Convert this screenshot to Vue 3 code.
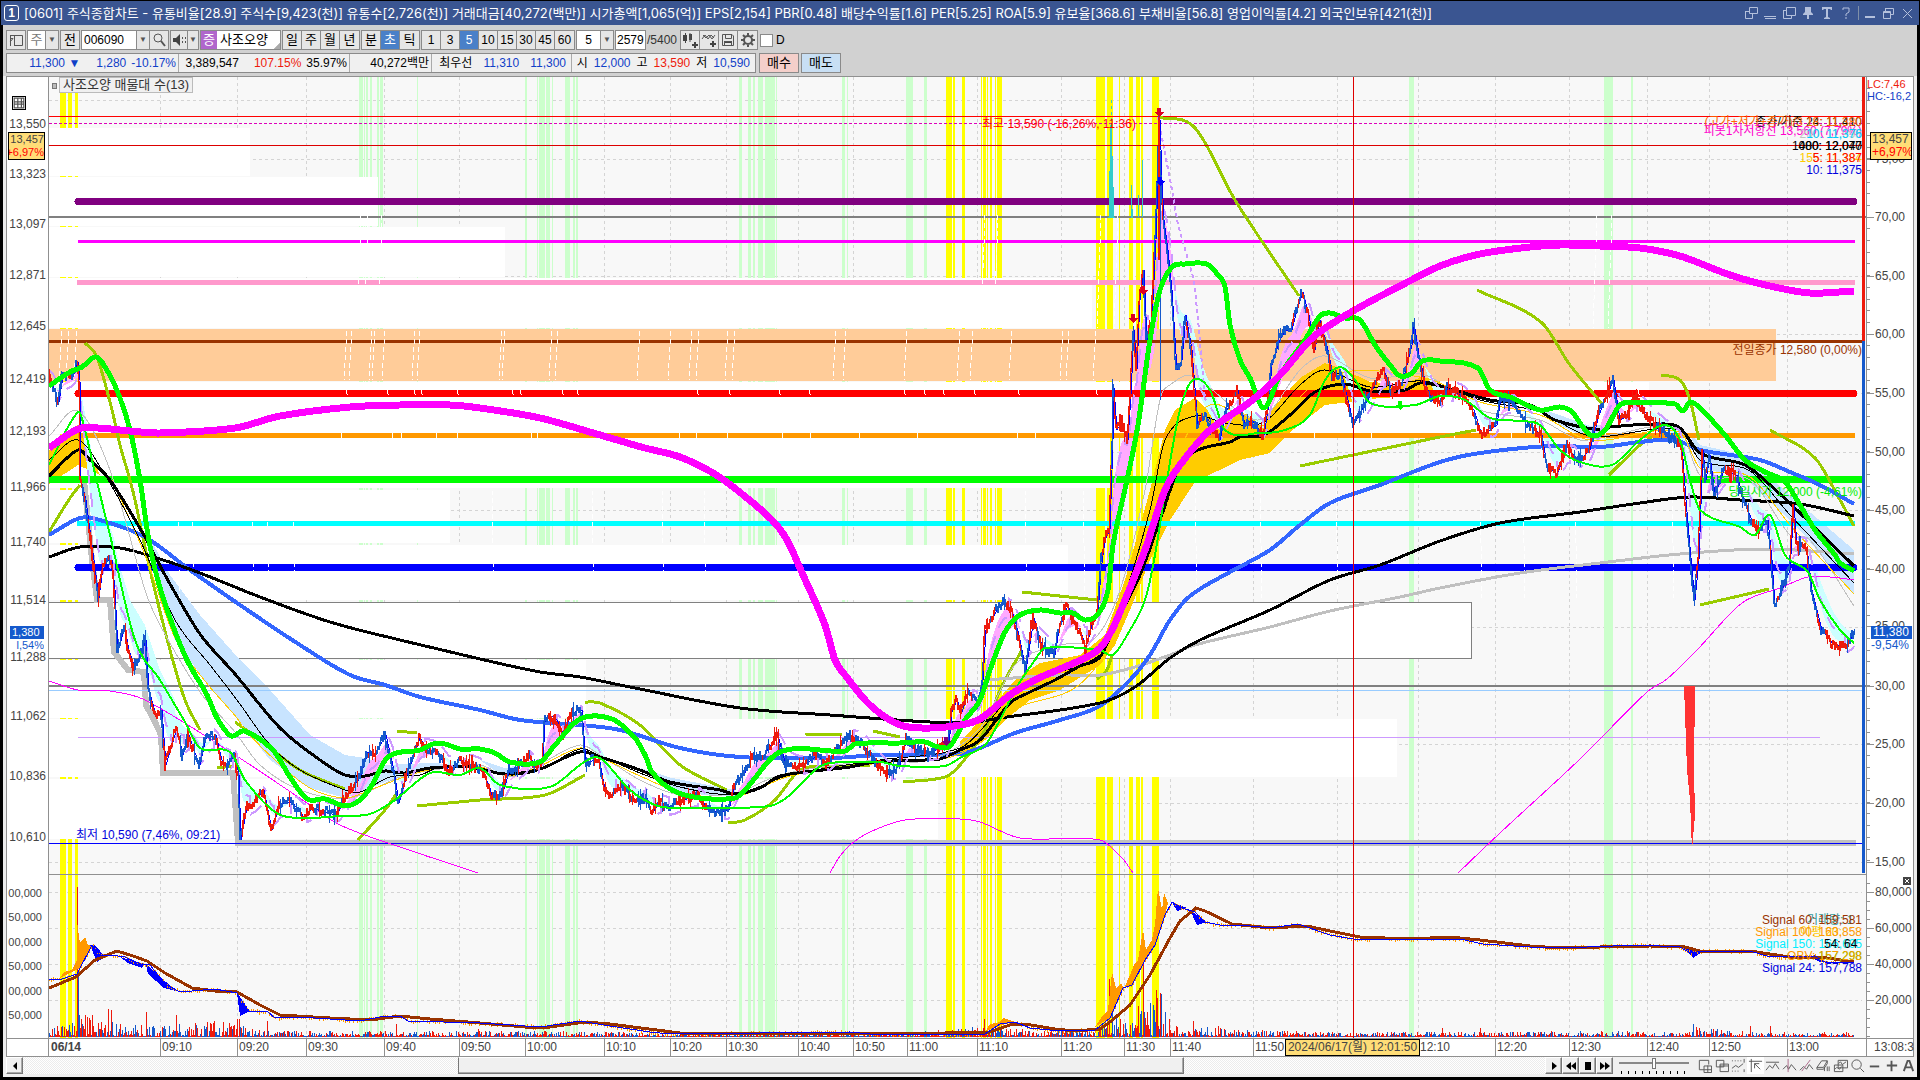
<template>
  <div class="window">
    <header class="titlebar">
      <span class="titlebar__no">1</span>
      <h1 class="titlebar__text">{{ title }}</h1>
      <div class="titlebar__icons">
        <button v-for="icon in windowIcons" :key="icon.name" class="titlebar__btn" :class="{ 'titlebar__btn--split': icon.split }" :aria-label="icon.name">
          <svg viewBox="0 0 14 14"><path :d="icon.d" :class="{ solid: icon.solid }" /></svg>
        </button>
      </div>
    </header>

    <main class="frame">
      <section class="tools">
        <div class="tools__row">
          <button class="btn btn--icon" aria-label="패널"><svg viewBox="0 0 16 16"><path d="M2.5 3.5H14.5V13.5H6M2.5 3V14M6.5 3V13M2 6.5H5L2 10" /></svg></button>
          <div class="combo combo--type"><span class="combo__muted">주</span><button class="combo__arrow" aria-label="구분 선택">▼</button></div>
          <button class="btn">전</button>
          <div class="combo combo--code">
            <input v-model="code" class="combo__input" aria-label="종목코드" />
            <button class="combo__arrow" aria-label="종목 목록">▼</button>
            <button class="combo__arrow combo__arrow--wide" aria-label="종목 찾기"><svg viewBox="0 0 16 16"><circle cx="7" cy="6" r="4" /><path d="M10 9L14 14" class="thick" /></svg></button>
          </div>
          <div class="combo combo--sound">
            <button class="combo__arrow combo__arrow--wide" aria-label="소리"><svg viewBox="0 0 16 16"><path class="solid" d="M2 6H5L9 2V14L5 10H2Z" /><path d="M11.5 5V7M11.5 9V11M14.5 5V7M14.5 9V11" /></svg></button>
            <button class="combo__arrow" aria-label="소리 목록">▼</button>
          </div>
          <div class="stock"><span class="stock__badge">증</span><span class="stock__name">사조오양</span></div>
          <div class="btn-group">
            <button v-for="p in ['일', '주', '월', '년']" :key="p" class="btn btn--cell">{{ p }}</button>
          </div>
          <div class="btn-group">
            <button v-for="p in ['분', '초', '틱']" :key="p" class="btn btn--cell" :class="{ 'btn--active': p === unit }" @click="unit = p">{{ p }}</button>
          </div>
          <div class="btn-group">
            <button v-for="n in [1, 3, 5, 10, 15, 30, 45, 60]" :key="n" class="btn btn--cell btn--number" :class="{ 'btn--active': n === span }" @click="span = n">{{ n }}</button>
          </div>
          <div class="combo combo--span"><span>5</span><button class="combo__arrow" aria-label="주기 선택">▼</button></div>
          <input v-model="bars" class="bars" aria-label="봉 개수" />
          <span class="bars-total">/5400</span>
          <div class="btn-group">
            <button v-for="icon in chartIcons" :key="icon.name" class="btn btn--cell" :aria-label="icon.name">
              <svg viewBox="0 0 16 16"><path v-if="icon.s" class="solid" :d="icon.s" /><path :d="icon.d" :class="{ thick: icon.thick }" /></svg>
            </button>
          </div>
          <label class="check"><input type="checkbox" />D</label>
        </div>

        <div class="tools__row">
          <div class="quote">
            <div class="quote__cell quote__cell--price blue"><span>11,300 ▼</span><span>1,280</span><span>-10.17%</span></div>
            <div class="quote__cell quote__cell--volume"><span>3,389,547</span><span class="red">107.15%</span><span>35.97%</span></div>
            <div class="quote__cell quote__cell--amount"><span>40,272백만</span></div>
            <div class="quote__cell quote__cell--best"><span>최우선</span><span class="blue">11,310</span><span class="blue">11,300</span></div>
            <div class="quote__cell quote__cell--range"><span>시</span><span class="blue">12,000</span><span>고</span><span class="red">13,590</span><span>저</span><span class="blue">10,590</span></div>
          </div>
          <button class="order order--buy">매수</button>
          <button class="order order--sell">매도</button>
        </div>
      </section>

      <section class="chart">
        <div class="axis axis--left">
          <button class="axis__menu" aria-label="데이터 표"><svg viewBox="0 0 10 10"><path d="M1 1H9V9H1ZM1 4H9M4 1V9M7 1V9M1 6H9" /></svg></button>
          <span v-for="l in leftLabels" :key="l[0]" class="axis__label" :style="at(l[1])">{{ l[0] }}</span>
          <span v-for="(l, i) in leftVolume" :key="i" class="axis__label axis__label--volume" :style="at(893 + i * 24.4)">{{ l }}</span>
          <div class="tag tag--cross" :style="at(146)"><span>13,457</span><span class="tag__rate">+6,97%</span></div>
          <div class="tag tag--last" :style="at(639)"><b>1,380</b><span>l,54%</span></div>
        </div>

        <div class="plot">
          <svg class="plot__svg" viewBox="49 77 1817 961" preserveAspectRatio="none">
            <path class="grid" :d="gridPath" />
            <rect v-for="b in yellowBands" :key="b[0]" :x="b[0]" y="77" :width="b[1]" height="961" fill="#ffff00" />
            <rect v-for="b in greenBands" :key="b[0]" :x="b[0]" y="77" :width="b[1]" height="961" fill="#ccffcc" />

            <!-- volume profile -->
            <rect v-for="p in profile" :key="p[0]" x="49" :y="p[0]" :width="p[2] - 49" :height="p[1] - p[0]" fill="#ffffff" />
            <rect x="49" y="329" width="1727" height="52" fill="#ffcc99" />
            <path d="M49 602.5H1471.5V658.5H49" fill="#ffffff" stroke="#808080" />

            <path d="M84 480L92 560L97 600H110L114 652L128 670L144 672L146 705L155 722L161 735L163 773H233L238 843H1856" stroke="#c0c0c0" stroke-width="6" fill="none" />
            <path v-for="(f, i) in clouds" :key="i" :d="line(f.p) + 'Z'" :fill="f.c" />
            <path :d="trend.down" stroke="#ccffff" />
            <path :d="trend.up" stroke="#ffaaff" />

            <path v-for="l in levels" :key="l.y" :d="`M${l.x || 49} ${l.y}H${l.e || 1862}`" :stroke="l.c" :stroke-width="l.w" :stroke-dasharray="l.dash" :stroke-linecap="l.w > 6 && l.x ? 'round' : 'butt'" />
            <path class="ghost" :d="ghosts" />
            <path d="M1111 100V180" stroke="#33cccc" stroke-dasharray="3 3" />
            <path d="M1111 125L1114 217H1109ZM1131 185V217H1133M1138 195V217M1142 160V217" fill="#33cccc" stroke="#33cccc" />

            <path v-for="(o, i) in olive" :key="'o' + i" :d="smooth(o)" stroke="#99cc00" stroke-width="3" />
            <path v-for="(m, i) in averages" :key="'m' + i" :d="smooth(m.p)" :stroke="m.c" :stroke-width="m.w" stroke-linejoin="round" />
            <path :d="trend.lag" stroke="#cc99ff" stroke-width="2" stroke-dasharray="14 9" />
            <path d="M1158 117L1172 190L1178 225L1194 280L1199 330L1205 400" stroke="#cc99ff" stroke-width="2" stroke-dasharray="4 3" />
            <path :d="candles.mid" stroke="#0000ff" />
            <path :d="candles.down" stroke="#1559cc" />
            <path :d="candles.up" stroke="#ee1a0c" />
            <path d="M1158.5 117V260" stroke="#ee1a0c" stroke-width="2" />
            <path d="M1160.5 180V400" stroke="#1559cc" />
            <path v-for="(m, i) in frontAverages" :key="'f' + i" :d="smooth(m.p)" :stroke="m.c" :stroke-width="m.w" stroke-linejoin="round" />
            <path d="M1684 686H1695L1694 770L1695 815L1692 850L1690 800L1687 770Z" fill="#ff3333" />
            <path v-for="a in arrows" :key="a.x" :d="`M${a.x - 2} ${a.y - 5}h4v4h3l-5 5l-5-5h3z`" :fill="a.c" />

            <!-- volume and OBV pane -->
            <path :d="volume.up" stroke="#ee1a0c" />
            <path :d="volume.down" stroke="#1559cc" />
            <path v-for="(f, i) in obvFills" :key="'v' + i" :d="line(f.p) + 'Z'" :fill="f.c" />
            <path :d="obvJitter" stroke="#ff9900" />
            <path :d="line(obvSlow)" stroke="#993300" stroke-width="3" />
            <path :d="line(obvFast)" stroke="#0000ff" />

            <path d="M49 874.5H1866" stroke="#909090" />
            <rect x="1862" y="77" width="3" height="264" fill="#ee1a0c" />
            <rect x="1862" y="341" width="3" height="532" fill="#1559cc" />
            <path d="M49 145.5H1862" stroke="#dd0000" />
            <path d="M1353.5 77V1038" stroke="#dd0000" />
          </svg>
          <i class="plot__handle"></i>
          <span class="plot__title">사조오양 매물대 수(13)</span>
          <span v-for="(t, i) in notes" :key="i" class="note" :class="'note--' + t.c" :style="place(t)">{{ t.t }}</span>
        </div>

        <div class="axis axis--right">
          <div class="axis__limits"><span class="red">LC:7,46</span><span class="blue">HC:-16,2</span></div>
          <svg class="axis__ticks" viewBox="0 77 8 961" preserveAspectRatio="none"><path :d="tickPath" /></svg>
          <span v-for="l in rightLabels" :key="l[0]" class="axis__label" :style="at(l[1])">{{ l[0] }}</span>
          <button class="axis__close" :style="at(881)" aria-label="닫기"><svg viewBox="0 0 8 8"><path d="M2 2L6 6M6 2L2 6" /></svg></button>
          <div class="tag tag--cross" :style="at(146)"><span>13,457</span><span class="tag__rate">+6,97%</span></div>
          <div class="tag tag--last" :style="at(639)"><b>11,380</b><span>-9,54%</span></div>
        </div>

        <div class="times times--edge"></div>
        <div class="times">
          <b class="times__day">06/14</b>
          <span v-for="t in timeLabels" :key="t[0]" class="times__label" :style="{ left: pctX(t[1]) }">{{ t[0] }}</span>
          <span class="times__cursor" :style="{ left: pctX(1285) }">2024/06/17(월) 12:01:50</span>
        </div>
        <div class="times times--end">13:08:3</div>
      </section>

      <footer class="bottom">
        <button class="bottom__btn" aria-label="왼쪽으로"><svg viewBox="0 0 12 12"><path class="solid" d="M8 2V10L4 6Z" /></svg></button>
        <div class="bottom__track"><div class="bottom__thumb" :style="{ left: '28.6%', width: '47.7%' }"></div></div>
        <button v-for="p in players" :key="p.name" class="bottom__btn" :aria-label="p.name"><svg viewBox="0 0 12 12"><path class="solid" :d="p.d" /></svg></button>
        <label class="slider" aria-label="속도"><input v-model="speed" type="range" min="0" max="10" /></label>
        <button v-for="icon in drawIcons" :key="icon.name" class="bottom__tool" :class="{ 'bottom__tool--on': icon.on }" :aria-label="icon.name">
          <svg viewBox="0 0 16 16"><path :d="icon.d" :class="{ thick: icon.thick }" /><path v-if="icon.r" :d="icon.r" class="accent" /></svg>
        </button>
      </footer>
    </main>
  </div>
</template>

<script setup>
import { ref } from 'vue'

const title = '[0601] 주식종합차트 - 유통비율[28.9] 주식수[9,423(천)] 유통수[2,726(천)] 거래대금[40,272(백만)] 시가총액[1,065(억)] EPS[2,154] PBR[0.48] 배당수익률[1.6] PER[5.25] ROA[5.9] 유보율[368.6] 부채비율[56.8] 영업이익률[4.2] 외국인보유[421(천)]'

const code = ref('006090')
const bars = ref('2579')
const unit = ref('초')
const span = ref(5)
const speed = ref(5)

const windowIcons = [
  { name: '연결', d: 'M5.5 1.5H13.5V7.5H5.5ZM1 5.5H5M1.5 5V12.5H8.5V7' },
  { name: '접기', d: 'M1 10.5H13M2 12.5H13' },
  { name: '복사', d: 'M4.5 1.5H13.5V9.5H4.5ZM1.5 4V12.5H9.5V10M1 4.5H4' },
  { name: '고정', d: 'M4 1H10V6L12 8V9H8V13H6V9H2V8L4 6Z', solid: true },
  { name: '글꼴', d: 'M2 1H12V4H11L10 3H8V11L10 12V13H4V12L6 11V3H4L3 4H2Z', solid: true },
  { name: '도움말', d: 'M4 4V2H10V6L7 8V10M7 11V13' },
  { name: '최소화', d: 'M2 10H12V12H2Z', solid: true, split: true },
  { name: '이전 크기', d: 'M4.5 2.5H12.5V8.5H10M2.5 5.5H9.5V12.5H2.5ZM4.5 2V5M2 6.5H10' },
  { name: '닫기', d: 'M3 3L12 12M12 3L3 12' }
]

const chartIcons = [
  { name: '차트 유형', s: 'M1 3H5V9H1ZM3 1H4V11H3ZM7 2H10V8H7ZM10 12H16V14H10ZM12 10H14V16H12Z', d: 'M8 1V10' },
  { name: '지표 추가', s: 'M9 11H15V13H9ZM11 9H13V15H11Z', d: 'M1 7L4 3L7 7L10 3L13 6M2 3L5 6L8 3L11 7L14 3' },
  { name: '저장', s: 'M4 9H12V11H4Z', d: 'M2.5 2.5H12L13.5 4V13.5H2.5ZM5.5 2V6.5H11.5V2M4.5 14V9.5H11.5V14' },
  { name: '설정', d: 'M8 4A4 4 0 1 0 8 12A4 4 0 1 0 8 4M8 1V4M8 12V15M1 8H4M12 8H15M3 3L5 5M11 11L13 13M13 3L11 5M5 11L3 13', thick: true }
]

const players = [
  { name: '재생', d: 'M4 2L9 6L4 10Z' },
  { name: '뒤로', d: 'M6 2V10L1 6ZM11 2V10L6 6Z' },
  { name: '정지', d: 'M3 2H9V10H3Z' },
  { name: '앞으로', d: 'M1 2L6 6L1 10ZM6 2L11 6L6 10Z' }
]

const drawIcons = [
  { name: '창 추가', d: 'M8 12.5H2.5V2.5H12.5V7M7.5 8.5H15.5V15.5H7.5ZM11.5 8V15M8 12.5H15' },
  { name: '창 복사', d: 'M2.5 2.5H10.5V9.5H2.5ZM6.5 6.5H15.5V14.5H6.5ZM6 8.5H15' },
  { name: '구간', d: 'M1 3H2M4 3H5M7 3H8M10 3H11M14 1V5M1 14H2M4 14H5M7 14H8M14 12V15M1 11L5 8L8 10L13 6' },
  { name: '십자선', d: 'M1 3.5H15M3.5 1V15M7 6L13 12M7 6V11M7 6H12', on: true },
  { name: '수평선', d: 'M1 4.5H15M1 13L5 8L8 11L11 6L15 12' },
  { name: '수직선', d: 'M1 12L5 8L7 12L10 7L15 13', r: 'M6.5 1V15' },
  { name: '추세선', d: 'M1 13L5 9L8 12L11 7L15 12', r: 'M3 14L12 2' },
  { name: '지우기', d: 'M1 10L6 3H12L8 10ZM1 10V12H8L12 6V3M9 10V14M12 9V14M14 9V14' },
  { name: '차트 겹치기', d: 'M5.5 2.5H15.5V10.5H5.5ZM1.5 7.5H10.5V14.5H1.5ZM6 6L8 4L10 7L14 4M2 12L4 10L7 12L9 9' },
  { name: '확대경', d: 'M7 2A5 5 0 1 0 7 12A5 5 0 1 0 7 2M11 11L15 15' },
  { name: '축소', d: 'M3 9H13', thick: true },
  { name: '확대', d: 'M3 8H14M8 3V14', thick: true },
  { name: '자동', d: 'M3 14L7 3H9L13 14M5 10H11', thick: true }
]

// axis scales
const at = y => ({ top: ((y - 77) / 961) * 100 + '%' })
const pctX = x => ((x - 49) / 1817) * 100 + '%'
const place = t => (t.x ? { left: pctX(t.x), ...at(t.y) } : at(t.y))

const leftLabels = [['13,550', 124], ['13,323', 174], ['13,097', 224], ['12,871', 275], ['12,645', 326], ['12,419', 379], ['12,193', 431], ['11,966', 487], ['11,740', 542], ['11,514', 600], ['11,288', 657], ['11,062', 716], ['10,836', 776], ['10,610', 837]]
const leftVolume = ['00,000', '50,000', '00,000', '50,000', '00,000', '50,000']
const rightLabels = [['75,00', 159], ['70,00', 217], ['65,00', 276], ['60,00', 334], ['55,00', 393], ['50,00', 452], ['45,00', 510], ['40,00', 569], ['35,00', 626], ['30,00', 686], ['25,00', 744], ['20,00', 803], ['15,00', 862], ['80,000', 892], ['60,000', 928], ['40,000', 964], ['20,000', 1000]]
const times = [['09:10', 160], ['09:20', 237], ['09:30', 306], ['09:40', 384], ['09:50', 459], ['10:00', 525], ['10:10', 604], ['10:20', 670], ['10:30', 726], ['10:40', 798], ['10:50', 853], ['11:00', 907], ['11:10', 977], ['11:20', 1061], ['11:30', 1124], ['11:40', 1170], ['11:50', 1253], ['12:00', 1337], ['12:10', 1418], ['12:20', 1495], ['12:30', 1569], ['12:40', 1647], ['12:50', 1709], ['13:00', 1787]]
// the cursor tag covers this one
const timeLabels = times.filter(t => t[0] !== '12:00')

const gridRows = [100, 159, 217, 276, 334, 393, 452, 510, 569, 627, 685, 744, 803, 862, 892, 928, 964, 1000]
const gridPath = gridRows.map(y => `M49 ${y + 0.5}H1862`).join('') + times.map(t => `M${t[1] + 0.5} 77V1038`).join('')

let tickPath = ''
for (let y = 88; y < 870; y += 11.7) tickPath += `M0 ${Math.round(y) + 0.5}H3`
for (let y = 883; y < 1038; y += 9) tickPath += `M0 ${y + 0.5}H3`
tickPath += rightLabels.map(l => `M0 ${l[1] + 0.5}H7`).join('')

const yellowBands = [[60, 6], [68, 4], [75, 3], [946, 6], [953, 2], [962, 3], [981, 1], [983, 3], [987, 1], [990, 2], [995, 1], [997, 5], [1096, 9], [1107, 6], [1119, 1], [1129, 4], [1136, 4], [1141, 2], [1152, 7]]
const greenBands = [[359, 4], [364, 1], [366, 2], [370, 2], [377, 2], [380, 3], [417, 1], [525, 2], [537, 1], [539, 6], [546, 4], [552, 1], [565, 5], [573, 2], [576, 2], [739, 3], [748, 3], [753, 2], [758, 5], [765, 10], [776, 1], [842, 3], [847, 1], [906, 7], [924, 3], [1409, 5], [1604, 9], [1631, 2]]
const profile = [[128, 176, 250], [177, 226, 378], [227, 277, 505], [278, 328, 1092], [382, 434, 1649], [435, 488, 1110], [490, 543, 450], [545, 600, 1068], [660, 718, 586], [719, 777, 1397], [779, 839, 938]]

const levels = [
  { y: 116.5, c: '#ff0000', w: 1 },
  { y: 123.5, c: '#dd00bb', w: 1, dash: '3 2' },
  { y: 201.5, c: '#800080', w: 7, x: 78, e: 1854 },
  { y: 217, c: '#808080', w: 2, e: 1866 },
  { y: 241.5, c: '#ff00ff', w: 3, x: 78, e: 1855 },
  { y: 282.5, c: '#ff99cc', w: 5, x: 77, e: 1855 },
  { y: 341.5, c: '#993300', w: 3 },
  { y: 393.5, c: '#ff0000', w: 7, x: 78, e: 1854 },
  { y: 435.5, c: '#ff9900', w: 5, x: 78, e: 1855 },
  { y: 479.5, c: '#00ff00', w: 7 },
  { y: 523.5, c: '#00ffff', w: 5, x: 77, e: 1855 },
  { y: 567.5, c: '#0000ff', w: 7, x: 78, e: 1854 },
  { y: 686, c: '#808080', w: 2, e: 1866 },
  { y: 690.5, c: '#99ccff', w: 1 },
  { y: 737.5, c: '#cc99ff', w: 1, x: 78, e: 1820 },
  { y: 843.5, c: '#0000ff', w: 1 }
]

const pts = s => s.split(' ').map(p => p.split(',').map(Number))
const line = s => 'M' + s.split(' ').join('L')

const smooth = s => {
  const p = pts(s)
  let d = `M${p[0]}`
  for (let i = 0; i < p.length - 1; i++) {
    const a = p[i - 1] || p[i]
    const b = p[i]
    const c = p[i + 1]
    const e = p[i + 2] || c
    // tangents follow the neighbours but stay inside the segment
    const h = (c[0] - b[0]) / 3
    const t1 = (c[1] - a[1]) / (c[0] - a[0] || 1)
    const t2 = (e[1] - b[1]) / (e[0] - b[0] || 1)
    d += `C${b[0] + h} ${b[1] + t1 * h} ${c[0] - h} ${c[1] - t2 * h} ${c[0]} ${c[1]}`
  }
  return d
}

const interp = (list, x) => {
  let i = 1
  while (i < list.length - 1 && list[i][0] < x) i++
  const [x0, y0] = list[i - 1]
  const [x1, y1] = list[i]
  return y0 + ((y1 - y0) * (x - x0)) / (x1 - x0)
}

let seed = 7
const rand = () => {
  seed = (seed * 16807) % 2147483647
  return seed / 2147483647
}

const price = pts('49,380 57,402 61,376 72,374 76,362 78,380 79,480 84,500 92,560 97,598 100,575 104,560 110,560 113,590 116,650 123,628 127,650 133,668 140,652 144,640 147,690 154,715 160,710 164,765 170,745 175,728 181,755 187,735 192,750 198,765 204,738 214,735 220,760 226,765 233,755 237,775 239,840 245,808 250,805 262,790 270,830 278,803 290,802 303,818 310,808 325,812 335,815 345,795 358,778 366,752 373,755 384,735 392,770 397,803 405,775 418,738 425,748 435,752 448,772 458,760 470,765 480,770 487,785 490,795 500,795 508,770 520,765 528,755 533,768 541,762 543,722 548,715 555,720 562,735 568,715 576,710 580,710 584,762 592,760 598,762 603,790 610,795 620,785 632,800 645,798 650,815 658,800 665,808 680,800 697,795 705,808 715,812 727,810 733,785 742,775 750,758 762,755 776,735 783,762 790,767 803,765 815,755 825,765 838,745 848,735 862,745 872,760 887,775 898,765 905,738 915,750 925,752 940,748 947,745 950,712 955,700 960,712 967,690 973,700 977,705 981,680 984,630 990,620 996,608 1003,602 1010,610 1017,635 1024,670 1032,618 1040,645 1047,650 1053,655 1057,630 1066,605 1072,620 1080,635 1084,648 1090,625 1096,615 1099,570 1103,540 1108,530 1111,440 1112,388 1115,430 1120,422 1126,440 1129,395 1132,330 1135,370 1138,300 1142,270 1145,340 1150,320 1154,240 1158,120 1160,180 1162,220 1166,250 1170,290 1175,370 1180,360 1184,315 1190,350 1196,425 1203,415 1210,425 1218,440 1225,410 1236,390 1243,425 1250,420 1262,435 1266,410 1270,365 1278,340 1284,330 1290,330 1295,310 1301,292 1307,315 1313,350 1318,320 1326,350 1331,375 1340,375 1352,425 1360,410 1366,400 1375,380 1382,370 1390,390 1400,385 1410,345 1412,322 1417,355 1424,385 1430,400 1440,400 1446,388 1460,395 1472,410 1480,435 1495,425 1499,397 1510,402 1525,422 1540,435 1545,465 1555,475 1566,445 1575,462 1588,450 1597,415 1605,395 1612,380 1618,420 1626,415 1633,395 1645,415 1655,425 1668,435 1680,445 1684,500 1690,570 1693,600 1697,560 1701,450 1704,480 1708,455 1713,495 1722,470 1735,475 1742,500 1750,520 1758,530 1766,520 1770,560 1773,605 1780,590 1788,570 1792,505 1795,545 1805,548 1810,590 1820,630 1832,645 1845,645 1853,632')

const candles = { up: '', down: '', mid: '' }
const trend = { up: '', down: '', lag: '' }
let prev = 380
let fast = 380
let slow = 385
let side = 'up'
for (let x = 49; x <= 1854; x++) {
  const base = interp(price, x)
  const close = Math.round(base + (rand() - 0.5) * 8)
  const wick = rand() > 0.85 ? 7 : 2
  if (rand() > 0.7) side = rand() > 0.45 ? 'up' : 'down'
  candles[side] += `M${x + 0.5} ${Math.min(prev, close) - wick}V${Math.max(prev, close) + wick}`
  prev = close
  fast += (base - fast) / 7
  slow += (base - slow) / 18
  candles.mid += `${x === 49 ? 'M' : 'L'}${x} ${Math.round(interp(price, x - 2))}`
  trend[fast < slow ? 'up' : 'down'] += `M${x + 0.5} ${Math.round(fast)}V${Math.round(slow)}`
  trend.lag += `${x === 49 ? 'M' : 'L'}${x} ${Math.round(fast + (base < fast ? 9 : -9))}`
}

const averages = [
  { c: '#c0c0c0', w: 3, p: '985,680 1060,675 1100,675 1135,667 1170,655 1195,645 1270,627 1330,611 1400,597 1440,588 1520,573 1600,563 1680,554 1765,549 1854,554' },
  { c: '#3366ff', w: 4, p: '49,535 80,518 100,520 145,537 190,570 240,605 300,645 350,675 385,685 420,697 480,710 520,720 580,725 620,730 680,748 740,757 830,758 880,755 960,754 980,748 1015,733 1060,720 1100,706 1130,680 1150,655 1170,620 1190,596 1230,572 1270,550 1300,525 1330,503 1380,485 1440,462 1480,453 1550,446 1600,447 1640,442 1675,440 1700,450 1760,460 1790,472 1820,485 1854,504' },
  { c: '#000000', w: 3, p: '49,557 80,547 120,548 160,559 200,573 260,597 330,622 400,640 480,659 540,672 580,677 630,687 740,708 830,715 930,722 975,722 1000,718 1100,703 1135,687 1170,658 1200,640 1270,610 1330,580 1380,565 1440,541 1500,523 1580,512 1640,503 1690,497 1740,500 1800,504 1854,516' },
  { c: '#c0c0c0', w: 1, p: '49,436 78,411 110,470 145,590 160,625 200,692 235,732 260,765 300,790 350,798 400,777 440,769 480,765 510,777 540,764 580,745 600,755 640,780 680,795 735,793 780,775 850,763 880,760 930,760 980,728 1015,665 1060,645 1095,638 1120,590 1145,490 1160,400 1170,385 1192,376 1240,412 1264,418 1300,370 1325,356 1370,378 1425,375 1480,410 1540,420 1580,440 1610,435 1680,430 1700,475 1750,480 1790,535 1810,540 1854,606' },
  { c: '#ffcc00', w: 1, p: '112,480 145,555 175,638 205,681 237,718 245,730 275,760 310,788 345,798 370,790 410,775 440,768 480,767 510,776 540,766 580,748 600,757 640,776 680,792 735,797 790,776 880,763 960,754 1010,712 1100,661 1198,415 1264,425 1330,375 1425,378 1480,402 1540,415 1590,440 1680,432 1700,468 1750,477 1790,525 1854,594' },
  { c: '#000000', w: 1, p: '49,460 78,440 105,475 140,540 175,620 210,665 237,700 270,745 300,770 345,790 360,792 390,777 420,775 440,767 480,768 510,775 540,770 580,749 600,756 640,773 680,787 735,794 790,775 880,760 960,748 990,720 1020,685 1100,655 1120,610 1150,510 1165,440 1195,416 1225,423 1264,422 1300,385 1325,370 1370,387 1425,381 1480,400 1540,412 1590,436 1680,430 1700,460 1750,471 1790,515 1854,583' },
  { c: '#000000', w: 3, p: '49,476 78,450 90,460 110,480 145,537 165,575 200,634 235,674 280,728 320,760 345,775 365,776 385,771 405,773 430,768 470,767 505,774 540,769 580,752 600,757 640,770 670,782 720,790 735,794 760,788 780,776 850,767 875,762 925,760 940,759 960,750 980,740 1010,703 1028,693 1055,680 1080,666 1100,657 1115,625 1140,575 1160,520 1180,465 1198,450 1230,442 1240,437 1264,435 1290,415 1315,392 1345,384 1370,391 1405,390 1420,383 1440,386 1490,400 1530,405 1555,420 1600,430 1610,427 1660,424 1680,428 1700,453 1745,465 1770,485 1800,513 1854,566' },
  { c: '#ff00ff', w: 1, p: '49,681 78,690 110,691 145,700 235,755 307,803 340,825 400,847 478,873' },
  { c: '#ff00ff', w: 1, p: '830,873 838,859 850,845 870,832 905,820 960,819 980,822 1020,838 1100,840 1122,858 1133,873' },
  { c: '#ff00ff', w: 1, p: '1458,873 1500,833 1580,759 1647,692 1667,679 1697,650 1742,603 1780,588 1808,577 1830,577 1854,580' }
]

const frontAverages = [
  { c: '#00ff00', w: 2, p: '49,465 78,412 85,430 96,478 110,535 135,640 160,680 185,722 200,748 230,752 245,780 275,812 300,818 340,816 370,814 395,800 430,773 460,775 480,768 500,785 550,787 580,765 595,757 605,762 630,790 655,805 675,808 770,806 790,795 815,770 830,763 880,762 900,766 945,766 960,758 985,745 1000,720 1015,690 1035,660 1045,648 1100,650 1113,655 1130,630 1145,600 1155,555 1167,480 1180,410 1193,380 1210,390 1225,430 1260,433 1285,430 1310,415 1325,380 1340,367 1355,380 1370,403 1415,405 1440,396 1465,400 1490,418 1520,421 1540,425 1560,450 1580,462 1612,465 1640,440 1665,425 1680,440 1690,480 1700,510 1740,527 1755,535 1770,515 1785,555 1808,572 1820,600 1840,630 1854,643' },
  { c: '#00ff00', w: 5, p: '49,386 70,372 82,367 96,357 108,372 120,398 130,430 140,480 148,535 157,577 170,618 187,660 207,695 217,718 231,736 244,731 273,750 290,777 307,799 325,799 345,806 360,800 372,785 388,757 420,750 433,744 445,744 460,749 480,749 495,753 510,762 540,762 555,745 580,719 612,719 635,738 645,755 652,772 672,790 700,798 735,798 745,790 780,752 845,751 855,744 900,743 925,742 935,746 950,746 965,720 980,700 990,670 1005,632 1020,615 1040,610 1060,613 1073,613 1085,620 1098,614 1108,590 1113,545 1127,480 1138,425 1150,340 1160,290 1172,267 1185,264 1207,264 1218,275 1225,287 1230,325 1240,360 1250,378 1264,408 1280,375 1305,340 1320,316 1330,313 1345,318 1360,320 1375,345 1390,365 1400,376 1412,373 1422,361 1440,361 1478,368 1490,390 1510,397 1540,410 1560,407 1572,412 1590,435 1605,430 1620,405 1640,403 1675,404 1683,411 1690,402 1700,408 1725,435 1745,460 1765,472 1785,482 1800,505 1815,530 1835,555 1840,563 1854,571' },
  { c: '#ff00ff', w: 7, p: '49,448 78,429 98,428 130,431 160,433 235,428 280,416 350,407 400,405 450,405 480,408 540,418 600,435 645,448 680,457 713,473 737,490 772,520 787,540 803,575 825,625 835,660 845,675 870,705 900,725 930,728 960,725 980,719 1010,695 1035,680 1060,669 1085,658 1100,648 1112,630 1125,600 1145,550 1165,490 1180,465 1210,430 1250,402 1280,375 1310,340 1330,325 1360,307 1400,286 1440,266 1480,254 1530,247 1560,245 1600,246 1640,248 1680,256 1730,275 1770,286 1810,293 1854,291' }
]

const olive = [
  '49,532 70,498 80,485', '85,343 97,357 112,410 120,445 130,480 135,500 150,570 170,650 185,700 200,730', '235,722 260,740 300,770 345,789', '217,768 233,766',
  '358,840 385,810 397,793', '397,731 417,733', '417,806 480,800 545,795 585,775', '585,702 600,703 640,725 680,765 727,790', '728,823 745,820 775,800 800,770 830,767 870,765',
  '805,734 842,735', '873,731 900,737', '903,782 945,777 960,765 985,730 1000,690 1022,650', '1022,592 1097,600', '1097,679 1107,670 1112,655',
  '1158,117 1195,128 1235,200 1299,296', '1300,466 1440,437 1476,430', '1477,290 1541,322 1570,365 1603,405', '1609,475 1640,445 1652,437',
  '1661,375 1680,380 1690,400 1699,440', '1700,605 1769,589', '1770,430 1815,458 1840,500 1854,526'
]

const clouds = [
  { c: '#ffcc00', p: '49,450 78,425 100,475 78,465 49,484' },
  { c: '#ffcc00', p: '960,742 985,715 1015,680 1040,663 1080,655 1105,635 1125,580 1150,490 1165,430 1175,410 1195,398 1210,413 1240,412 1262,420 1280,400 1300,378 1325,363 1345,370 1370,382 1400,384 1420,378 1440,381 1440,392 1420,396 1380,398 1325,405 1290,432 1270,453 1240,460 1195,482 1170,520 1150,560 1130,610 1115,645 1100,665 1060,690 1030,700 1005,720 985,740 960,758' },
  { c: '#c8e4ff', p: '148,535 170,575 200,615 240,660 270,690 310,735 345,755 365,758 385,765 430,763 470,765 430,770 390,780 345,798 310,788 270,760 240,722 205,681 175,640 160,600' },
  { c: '#c8e4ff', p: '480,760 505,768 520,765 505,778' },
  { c: '#c8e4ff', p: '640,768 672,778 735,790 735,797 680,793' },
  { c: '#c8e4ff', p: '1540,408 1590,426 1600,425 1605,436 1590,440 1560,425' },
  { c: '#c8e4ff', p: '1690,432 1700,445 1745,455 1790,495 1854,550 1854,595 1800,530 1745,478 1700,468' },
  { c: '#ccffff', p: '96,480 105,510 115,550 130,600 145,625 160,670 175,700 175,715 155,685 140,655 125,615 108,565 90,510' }
]

const arrows = [
  { x: 1159, y: 113, c: '#dd0022' },
  { x: 1143, y: 291, c: '#dd0022' },
  { x: 1133, y: 319, c: '#dd0022' },
  { x: 1160, y: 182, c: '#0000ff' },
  { x: 946, y: 742, c: '#800080' },
  { x: 1400, y: 406, c: '#00ff00' }
]

// white marker traces over bands and levels
const ghosts = [
  ...[62, 69, 77, 347, 352, 372, 375, 385, 415, 420, 502, 505, 552, 558, 640, 671, 692, 699, 728, 735, 836, 846, 907, 960, 973, 1012, 1063, 1069, 1096].map(x => `M${x} 331L${x - 3} 380`),
  ...[346, 387, 414, 421, 457, 512, 520, 562, 577, 697, 729, 779, 809, 904, 924, 943, 974, 1018, 1096, 1593, 1638].map(x => `M${x} 390L${x + 2} 398`),
  ...[342, 393, 402, 437, 458, 532, 538, 680, 697, 728, 783, 811, 860, 918, 1018, 1036, 1315, 1372, 1455, 1512, 1606].map(x => `M${x} 433L${x - 1} 438`),
  ...[178, 192, 252, 267, 293, 492, 592, 662, 704, 1025, 1083, 1195, 1260, 1336, 1480, 1523, 1575, 1672].map(x => `M${x} 490L${x + 2} 598`),
  ...[361, 368, 382, 998, 985, 1101, 1118, 1597, 1612].map(x => `M${x} 215L${x - 4} 328`)
].join('')

const notes = [
  { t: '최고 13,590 (-16,26%, 11:36)', c: 'red', x: 982, y: 124 },
  { t: '최저 10,590 (7,46%, 09:21)', c: 'blue', x: 76, y: 835 },
  { t: '전일종가 12,580 (0,00%)', c: 'brown', y: 350 },
  { t: '당일시가 12,000 (-4,61%)', c: 'green', y: 492 },
  { t: '종가/기준 24: 11,410', c: 'black', y: 122 },
  { t: '(고가+저가+종가)/3 18: 11,380', c: 'amber', y: 122 },
  { t: '피봇1차저항선 13,560 (7,79%)', c: 'magenta', y: 131 },
  { t: '200: 11,998', c: 'gray', y: 134 },
  { t: '10: 11,376', c: 'sky', y: 134 },
  { t: '480: 12,077', c: 'black', y: 146 },
  { t: '1000: 12,040', c: 'black', y: 146 },
  { t: '155: 11,384', c: 'yellow', y: 158 },
  { t: '5: 11,387', c: 'red', y: 158 },
  { t: '10: 11,375', c: 'blue', y: 170 },
  { t: '거래량: 1', c: 'teal', x: 1807, y: 920 },
  { t: 'Signal 60: 159,581', c: 'brown', y: 920 },
  { t: '이평 20:', c: 'yellow', x: 1800, y: 932 },
  { t: 'Signal 100: 163,858', c: 'orange', y: 932 },
  { t: 'Signal 150: 166,695', c: 'cyan', y: 944 },
  { t: '54: 64', c: 'black', x: 1824, y: 944 },
  { t: '157,298', c: 'green', y: 956 },
  { t: 'OBV: 157,298', c: 'orange', y: 956 },
  { t: 'Signal 24: 157,788', c: 'blue', y: 968 }
]

const obvSlow = '49,988 76,977 95,960 117,951 133,956 147,961 165,973 192,988 215,991 237,992 260,1005 280,1015 330,1018 370,1020 400,1016 430,1019 480,1023 525,1027 550,1027 585,1022 610,1024 680,1033 800,1033 900,1034 990,1032 1010,1025 1025,1024 1055,1029 1075,1031 1100,1029 1110,1022 1130,1005 1150,975 1170,938 1180,921 1196,908 1205,911 1232,924 1270,928 1307,926 1330,931 1360,937 1410,939 1450,937 1480,940 1530,946 1560,948 1600,947 1650,946 1685,947 1700,951 1750,951 1790,957 1820,957 1854,962'
const obvFast = '49,979 62,979 77,974 92,945 100,955 110,955 125,957 140,964 150,965 165,984 180,992 215,989 237,993 248,1011 268,1012 275,1018 300,1017 360,1021 385,1016 400,1016 408,1021 480,1023 540,1027 580,1021 610,1026 650,1032 670,1034 850,1032 870,1034 985,1034 1000,1024 1015,1022 1030,1028 1060,1031 1095,1030 1110,1018 1123,988 1132,985 1145,960 1155,945 1165,915 1172,902 1182,908 1195,912 1205,922 1220,925 1240,925 1270,928 1298,924 1330,935 1353,939 1410,939 1460,939 1483,944 1530,947 1560,948 1640,945 1680,947 1690,953 1705,951 1750,951 1770,957 1815,956 1825,962 1854,962'
const obvFills = [
  { c: '#ff9900', p: '60,978 64,972 72,970 77,960 77,920 78,930 80,943 85,937 88,945 92,946 80,968' },
  { c: '#ff9900', p: '1095,1027 1103,1015 1108,1010 1112,972 1116,988 1121,983 1124,988 1130,975 1134,965 1138,960 1143,930 1146,950 1152,940 1155,925 1158,888 1162,910 1164,893 1168,903 1165,915 1155,945 1145,960 1132,985 1123,988 1110,1018' },
  { c: '#ff9900', p: '985,1032 990,1024 1000,1022 1003,1018 1015,1022 1000,1025' },
  { c: '#0000ff', p: '90,945 95,945 105,957 97,962' },
  { c: '#0000ff', p: '120,957 145,964 142,968 128,963' },
  { c: '#0000ff', p: '146,964 176,991 164,988 148,974' },
  { c: '#0000ff', p: '237,993 250,1011 240,1016' },
  { c: '#0000ff', p: '1172,902 1187,908 1177,911' },
  { c: '#0000ff', p: '1190,910 1207,922 1197,925' },
  { c: '#0000ff', p: '1684,948 1702,952 1693,958' },
  { c: '#0000ff', p: '1810,957 1830,962 1820,962' }
]

const fastPts = pts(obvFast)
let obvJitter = ''
for (let x = 49; x < 1854; x += 2) {
  const y = Math.round(interp(fastPts, x))
  obvJitter += `M${x + 0.5} ${y - Math.round(rand() * 2)}V${y + Math.round(rand() * 3)}`
}

const volumeShape = pts('49,8 75,15 78,34 85,24 100,20 115,25 125,10 170,14 230,15 240,18 260,6 400,5 530,5 700,3 900,3 985,10 1015,8 1050,5 1100,8 1110,30 1125,15 1140,30 1160,44 1165,25 1175,12 1250,6 1353,4 1680,5 1690,14 1700,9 1750,4 1854,4')
const spikes = { 77: 150, 85: 22, 92: 22, 108: 28, 111: 27, 146: 25, 176: 22, 214: 16, 237: 18, 267: 16, 396: 13, 478: 8, 984: 18, 1109: 58, 1112: 32, 1138: 31, 1143: 83, 1156: 47, 1160: 44, 1193: 16, 1218: 11, 1442: 9, 1480: 9, 1750: 11, 1770: 11 }
const volume = { up: '', down: '' }
for (let x = 49; x < 1854; x++) {
  const h = spikes[x] || 1 + Math.round(interp(volumeShape, x) * Math.pow(rand(), 1.7))
  volume[spikes[x] || rand() > 0.45 ? 'up' : 'down'] += `M${x + 0.5} 1037V${1037 - h}`
}
volume.down += 'M78.5 1037V970M79.5 1037V1015M1161.5 1037V994M1112.5 1037V1007'
</script>

<style>
body {
  margin: 0;
  background: #000000;
}
</style>

<style scoped>
.window {
  display: flex;
  flex-direction: column;
  min-height: 100vh;
  padding-top: 1px;
  box-sizing: border-box;
  background: #000000;
  color: #000000;
  font-family: "Liberation Sans", "Noto Sans CJK KR", sans-serif;
  font-size: 12px;
  line-height: 14px;
}

.window * {
  box-sizing: border-box;
}

button,
input {
  margin: 0;
  padding: 0;
  border: 0;
  border-radius: 0;
  background: none;
  color: inherit;
  font: inherit;
}

svg {
  display: block;
  fill: none;
  stroke: #555555;
}

.solid {
  fill: #444444;
  stroke: none;
}

.thick {
  stroke-width: 2;
}

.accent {
  stroke: #aa6688;
}

.red {
  color: #ee1a0c;
}

.blue {
  color: #1040c8;
}

.titlebar {
  display: flex;
  align-items: center;
  height: 24px;
  margin: 0 1px;
  padding: 0 3px;
  background: #3a5591;
  color: #ffffff;
}

.titlebar__no {
  width: 15px;
  height: 16px;
  border: 1px solid #ffffff;
  border-radius: 3px;
  text-align: center;
  font-weight: 700;
}

.titlebar__text {
  flex: 1;
  margin: 0 0 0 5px;
  font-family: Inter, "Noto Sans CJK KR", sans-serif;
  font-size: 13px;
  font-weight: 400;
  line-height: 20px;
  white-space: nowrap;
}

.titlebar__icons {
  display: flex;
  gap: 3px;
}

.titlebar__btn {
  width: 16px;
}

.titlebar__btn svg {
  width: 14px;
  height: 14px;
  stroke: #b4c0dc;
}

.titlebar__btn .solid {
  fill: #b4c0dc;
}

.titlebar__btn--split {
  width: 20px;
  padding-left: 4px;
  border-left: 1px solid #8090a8;
}

.frame {
  display: flex;
  flex: 1;
  flex-direction: column;
  margin: 0 3px 3px;
  background: #ececec;
}

.tools {
  display: flex;
  flex-direction: column;
  gap: 3px;
  height: 51px;
  padding: 5px 3px 0;
  background: #d1d1d1;
}

.tools__row {
  display: flex;
  gap: 1px;
  height: 20px;
}

.btn {
  width: 20px;
  height: 20px;
  border: 1px solid #8a8a8a;
  background: #e6e6e6;
  font-size: 13px;
}

.btn svg,
.combo__arrow svg {
  width: 16px;
  height: 16px;
  margin: auto;
}

.btn-group {
  display: flex;
  border: 1px solid #8a8a8a;
  background: #e6e6e6;
}

.btn--cell {
  width: 19px;
  height: 18px;
  border-width: 0 1px 0 0;
}

.btn--cell:last-child {
  border-right: 0;
}

.btn--number {
  font-size: 12px;
}

.btn--active {
  background: #4a80c8;
  color: #ffffff;
}

.combo {
  display: flex;
  align-items: center;
  border: 1px solid #8a8a8a;
  background: #ffffff;
}

.combo > span {
  flex: 1;
  text-align: center;
}

.combo__muted {
  color: #777777;
  font-size: 13px;
}

.combo--type {
  width: 32px;
}

.combo--code {
  width: 88px;
}

.combo--sound {
  width: 29px;
}

.combo--span {
  width: 38px;
}

.combo__input {
  flex: 1;
  width: 20px;
  height: 18px;
  padding-left: 2px;
}

.combo__arrow {
  width: 13px;
  height: 18px;
  border-left: 1px solid #8a8a8a;
  background: #e6e6e6;
  color: #555555;
  font-size: 8px;
}

.combo__arrow--wide {
  width: 19px;
}

.combo--sound .combo__arrow--wide {
  width: 16px;
  border-left: 0;
}

.stock {
  display: flex;
  gap: 3px;
  width: 81px;
  border: 1px solid #8a8a8a;
  background: linear-gradient(135deg, #ffffff 93%, #aaaaaa 94%);
  font-size: 13px;
  line-height: 18px;
}

.stock__badge {
  width: 16px;
  background: #b066cc;
  color: #ffffff;
  text-align: center;
}

.bars {
  width: 31px;
  padding-left: 1px;
  border: 1px solid #8a8a8a;
  background: #ffffff;
}

.bars-total {
  width: 32px;
  line-height: 20px;
  color: #333333;
}

.check {
  display: flex;
  align-items: center;
  gap: 3px;
  padding-left: 1px;
}

.check input {
  width: 13px;
  height: 13px;
  border: 1px solid #8a8a8a;
  background: #ffffff;
  appearance: none;
}

.quote {
  display: flex;
  width: 750px;
  margin-right: 2px;
  border: 1px solid #8a8a8a;
  background: #f0f0f0;
  line-height: 18px;
  white-space: nowrap;
}

.quote__cell {
  display: flex;
  justify-content: flex-end;
  padding-right: 2px;
  border-right: 1px solid #aaaaaa;
}

.quote__cell:last-child {
  border-right: 0;
}

.quote__cell--price {
  width: 172px;
  gap: 5px;
}

.quote__cell--price span:first-child {
  margin-right: 11px;
}

.quote__cell--volume {
  width: 171px;
  gap: 5px;
}

.quote__cell--volume span:first-child {
  margin-right: 10px;
}

.quote__cell--amount {
  width: 82px;
}

.quote__cell--best {
  width: 140px;
  gap: 11px;
  padding-right: 5px;
}

.quote__cell--range {
  flex: 1;
  gap: 6px;
  padding-right: 5px;
}

.order {
  width: 40px;
  margin-right: 1px;
  border: 1px solid #8a8a8a;
  font-size: 13px;
}

.order--buy {
  background: #f4cfca;
}

.order--sell {
  background: #c8dff4;
}

.chart {
  display: grid;
  flex: 1;
  grid-template-columns: 42px 1fr 47px;
  grid-template-rows: 1fr 18px;
  margin: 0 3px;
  border: 1px solid #909090;
  background: #ffffff;
}

.axis {
  position: relative;
  overflow: hidden;
  color: #444444;
}

.axis--left {
  border-right: 1px solid #909090;
}

.axis--right {
  border-left: 1px solid #909090;
}

.axis__menu {
  position: absolute;
  top: 19px;
  left: 5px;
  width: 14px;
  height: 14px;
  border: 1px solid #000000;
  background: #ffffff;
}

.axis__menu svg {
  width: 12px;
  height: 12px;
}

.axis__label {
  position: absolute;
  right: 2px;
  transform: translateY(-50%);
}

.axis__label--volume {
  right: 6px;
  font-size: 11px;
}

.axis--right .axis__label {
  right: auto;
  left: 8px;
}

.axis__ticks {
  position: absolute;
  top: 0;
  left: 0;
  width: 8px;
  height: 100%;
  stroke: #909090;
}

.axis__limits {
  position: relative;
  z-index: 1;
  display: flex;
  flex-direction: column;
  padding-top: 1px;
  font-size: 11px;
  line-height: 12px;
}

.axis__close {
  position: absolute;
  right: 2px;
  width: 8px;
  height: 8px;
  transform: translateY(-50%);
  background: #444444;
}

.axis__close svg {
  stroke: #ffffff;
}

.tag {
  position: absolute;
  display: flex;
  flex-direction: column;
  overflow: hidden;
  transform: translateY(-50%);
  line-height: 13px;
}

.axis--left .tag {
  left: 1px;
  align-items: flex-end;
  width: 37px;
  font-size: 11px;
}

.axis--right .tag {
  left: 3px;
  width: 42px;
  padding-left: 1px;
}

.tag--cross {
  border: 1px solid #000000;
  background: #ffdd77;
}

.tag__rate {
  color: #ff0000;
}

.tag--last {
  color: #1559cc;
}

.axis--left .tag--last {
  left: 3px;
  width: 34px;
}

.tag--last b {
  width: 100%;
  padding: 0 2px;
  background: #1559cc;
  color: #ffffff;
  font-weight: 400;
}

.plot {
  position: relative;
  overflow: hidden;
  background: #f8f8f8;
}

.plot__svg {
  position: absolute;
  width: 100%;
  height: 100%;
  stroke: none;
  shape-rendering: crispEdges;
}

.grid {
  stroke: #d4d4d4;
  stroke-dasharray: 3 3;
}

.ghost {
  stroke: #ffffff;
  stroke-dasharray: 5 3;
}

.plot__handle {
  position: absolute;
  top: 6px;
  left: 3px;
  width: 5px;
  height: 6px;
  border: 1px solid #777777;
  background: #bbbbbb;
}

.plot__title {
  position: absolute;
  top: 0;
  left: 10px;
  padding: 0 3px;
  border: 1px solid #bbbbbb;
  background: #f0f0f0;
  color: #333333;
  font-size: 13px;
}

.note {
  position: absolute;
  right: 4px;
  transform: translateY(-50%);
  text-align: right;
  white-space: nowrap;
}

.note[style*="left"] {
  right: auto;
}

.note--red {
  color: #ff0000;
}

.note--blue {
  color: #0000dd;
}

.note--brown {
  color: #993300;
}

.note--green {
  color: #00ee00;
}

.note--black {
  color: #000000;
}

.note--amber {
  color: #ff6600;
}

.note--magenta {
  color: #ff00cc;
}

.note--gray {
  color: #c0c0c0;
}

.note--sky {
  color: #00ccff;
}

.note--yellow {
  color: #ffcc00;
}

.note--teal {
  color: #339999;
}

.note--orange {
  color: #ff9900;
}

.note--cyan {
  color: #00eeff;
}

.times {
  position: relative;
  border-top: 1px solid #909090;
  color: #444444;
  line-height: 16px;
}

.times--edge {
  border-right: 1px solid #909090;
}

.times--end {
  padding-left: 7px;
  border-left: 1px solid #909090;
}

.times__day {
  padding-left: 2px;
}

.times__label {
  position: absolute;
  top: 0;
  height: 17px;
  padding-left: 1px;
  border-left: 1px solid #909090;
}

.times__cursor {
  position: absolute;
  top: 0;
  width: 135px;
  height: 17px;
  border: 1px solid #000000;
  background: #ffdd77;
  line-height: 15px;
  text-align: center;
  white-space: nowrap;
}

.bottom {
  display: flex;
  height: 20px;
  padding: 0 0 3px 3px;
  background: #f0f0f0;
}

.bottom__btn {
  width: 17px;
  border: 1px solid #777777;
  border-top-color: #ffffff;
  border-left-color: #ffffff;
  background: #f0f0f0;
  box-shadow: inset -1px -1px #aaaaaa;
}

.bottom__btn svg {
  width: 12px;
  height: 12px;
  margin: auto;
}

.bottom__btn .solid {
  fill: #000000;
}

.bottom__track {
  position: relative;
  flex: 1;
  background: repeating-conic-gradient(#ffffff 0 25%, #ececec 0 50%) 0 0 / 2px 2px;
}

.bottom__thumb {
  position: absolute;
  top: 0;
  bottom: 0;
  border: 1px solid #777777;
  border-top-color: #ffffff;
  background: #f0f0f0;
  box-shadow: inset -1px -1px #aaaaaa;
}

.slider {
  width: 70px;
  margin: 0 7px 0 6px;
  background: repeating-linear-gradient(90deg, #000000 0 1px, transparent 1px 7px) 2px 14px / 67px 3px no-repeat;
}

.slider input {
  display: block;
  width: 100%;
  height: 12px;
  appearance: none;
  background: linear-gradient(#888888, #888888) 0 5px / 100% 2px no-repeat;
}

.slider input::-webkit-slider-thumb {
  width: 4px;
  height: 11px;
  appearance: none;
  border: 1px solid #777777;
  background: #ffffff;
}

.bottom__tool {
  width: 17px;
}

.bottom__tool svg {
  width: 15px;
  height: 15px;
  margin: auto;
}

.bottom__tool--on {
  background: #ffffff;
}
</style>
